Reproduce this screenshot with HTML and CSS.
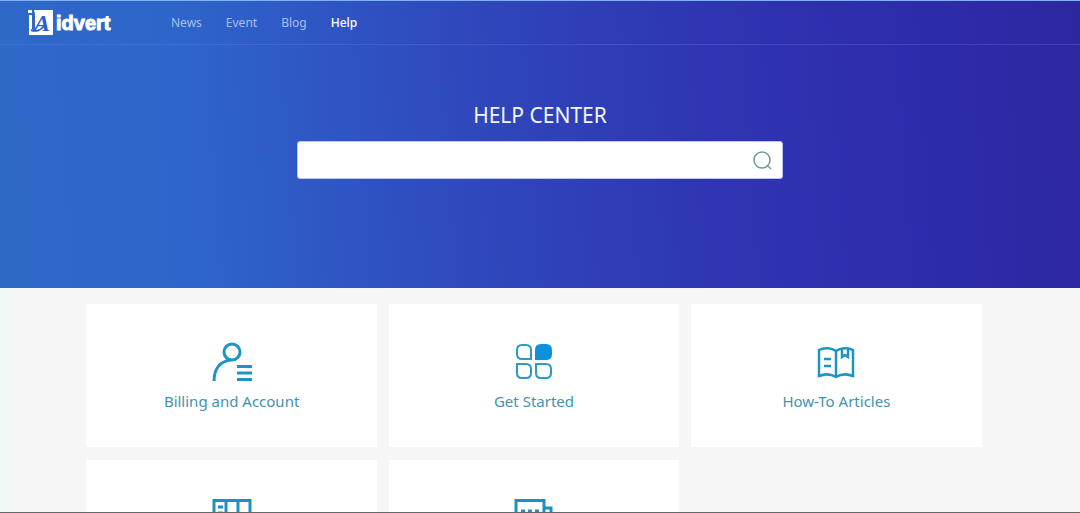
FILE: index.html
```html
<!DOCTYPE html>
<html lang="en">
    <head>
        <meta charset="utf-8">
        <meta name="viewport" content="width=device-width, initial-scale=1">
        <title>Help Center</title>
        <link rel="stylesheet" href="styles.css">
    </head>
    <body>
        <div class="hero">
            <header class="header">
                <a class="logo" href="#">
                    <svg class="logo-mark" width="25" height="27" viewBox="0 0 25 27" aria-hidden="true">
                        <path fill="#fff" d="M0 1h4v3H0zM6 1h19v25H1V6h3v14l3 2V5z"/>
                        <text class="logo-letter" x="6" y="22">A</text>
                        <path fill="none" stroke="#2f5fc8" stroke-width="2" d="M3 21c5 2 10 0 13-4"/>
                    </svg>
                    <span class="logo-text">idvert</span>
                </a>
                <nav class="nav">
                    <a href="#">News</a>
                    <a href="#">Event</a>
                    <a href="#">Blog</a>
                    <a class="active" href="#">Help</a>
                </nav>
            </header>
            <h1 class="title">HELP CENTER</h1>
            <form class="search">
                <input type="text" name="q" aria-label="Search help">
                <button type="submit" aria-label="Search">
                    <svg width="20" height="20" viewBox="0 0 20 20" fill="none" stroke="#6f9a9e" stroke-width="1.5">
                        <circle cx="10" cy="10" r="8"/>
                        <path d="M15 15l4 4"/>
                    </svg>
                </button>
            </form>
        </div>

        <main class="cards">
            <a class="card" href="#">
                <svg width="40" height="40" viewBox="0 0 40 40" fill="none" stroke="#1c95c6" stroke-width="3">
                    <circle cx="20" cy="10" r="8"/>
                    <path d="M2 39c0-12 6-20 17-21M25 24.500h15M25 31h15M25 37.500h15"/>
                </svg>
                <span>Billing and Account</span>
            </a>
            <a class="card" href="#">
                <svg width="40" height="40" viewBox="0 0 40 40" fill="none" stroke="#2a9bc2" stroke-width="2">
                    <path d="M8 3h4q5 0 5 5v9H8q-5 0-5-5V8q0-5 5-5z"/>
                    <path fill="#0c92dc" stroke="#0c92dc" d="M27 3h5q5 0 5 5v4q0 5-5 5H22V8q0-5 5-5z"/>
                    <path d="M3 22h9q5 0 5 5v4q0 5-5 5H8q-5 0-5-5z"/>
                    <path d="M22 22h10q5 0 5 5v4q0 5-5 5h-5q-5 0-5-5z"/>
                </svg>
                <span>Get Started</span>
            </a>
            <a class="card" href="#">
                <svg width="40" height="40" viewBox="0 0 40 40" fill="none" stroke="#1c95c6" stroke-width="2.500">
                    <path d="M20 9C16 6 8 5 3 8v26c5-2 12-2 17 1 5-3 12-3 17-1V8C32 5 24 6 20 9zM20 9v26"/>
                    <path d="M8 17h7M8 24h7M26 6v9l3-2 3 2V6"/>
                </svg>
                <span>How-To Articles</span>
            </a>
            <a class="card" href="#" aria-label="Reports">
                <svg width="40" height="40" viewBox="0 0 40 40" fill="none" stroke="#1c8fc6" stroke-width="3">
                    <path d="M2 2.500h36V38H2zM14 2v36M26 2v36M6 9h5M6 15h5"/>
                </svg>
            </a>
            <a class="card" href="#" aria-label="Contact">
                <svg width="40" height="40" viewBox="0 0 40 40" fill="none" stroke="#1c8fc6" stroke-width="3">
                    <path d="M2 2.500h28V30H2zM30 10h7v26H12M7 13h4M14 13h4M21 13h4"/>
                </svg>
            </a>
        </main>
    </body>
</html>
```
FILE: styles.css
```css
* {
    box-sizing:border-box;
}

html {
    scrollbar-width:none;
}

body {
    margin:0;
    background:linear-gradient(90deg, #f0f7f5, #f6f6f6 24px);
    font-family:"Noto Sans", "Open Sans", sans-serif;
}

/* thin line along the bottom of the window */
body::after {
    content:"";
    position:fixed;
    left:0;
    right:0;
    bottom:0;
    height:1px;
    background:#666;
}

a {
    text-decoration:none;
}

.hero {
    padding-bottom:109px;
    border-top:1px solid #7fb2f4;
    background:linear-gradient(86deg, #2f69c8 0%, #2e65ca 18%, #2f50c1 36%, #2f42b9 50%, #2f35b2 66%, #2e2bab 86%, #2d279f 100%);
}

.header {
    display:flex;
    align-items:center;
    height:44px;
    padding:0 28px;
    border-bottom:1px solid rgba(110,130,240,0.3);
}

.logo {
    display:flex;
    align-items:center;
    gap:3px;
    width:143px;
    color:#fff;
}

.logo-letter {
    fill:#2f5fc8;
    font:italic bold 24px "Liberation Serif", serif;
}

.logo-text {
    font:bold 20px/24px "Liberation Sans", sans-serif;
    -webkit-text-stroke:1px #fff;
}

.nav {
    display:flex;
    gap:24px;
    font-size:12px;
    line-height:16px;
}

.nav a {
    color:#a9bfec;
}

.nav .active {
    color:#fff;
    font-weight:500;
}

.title {
    margin:56px 0 12px;
    color:#f2f6ff;
    font-size:21px;
    font-weight:400;
    line-height:28px;
    text-align:center;
}

.search {
    display:flex;
    width:45%;
    height:38px;
    margin:0 auto;
    border:1px solid #b9c4f0;
    border-radius:3px;
    background:#fff;
}

.search input {
    flex:1;
    min-width:0;
    padding:0 12px;
    border:0;
    background:none;
    font:inherit;
    outline:0;
}

.search button {
    display:flex;
    align-items:center;
    padding:0 10px;
    border:0;
    background:none;
    cursor:pointer;
}

.cards {
    display:grid;
    grid-template-columns:repeat(3, 1fr);
    gap:13px 12px;
    width:84%;
    margin:0 auto;
    padding:16px 12px 16px 0;
}

.card {
    display:flex;
    flex-direction:column;
    align-items:center;
    gap:8px;
    min-height:143px;
    padding:38px 12px 0;
    background:#fff;
    color:#4393ae;
    font-size:15px;
    line-height:22px;
}
```
